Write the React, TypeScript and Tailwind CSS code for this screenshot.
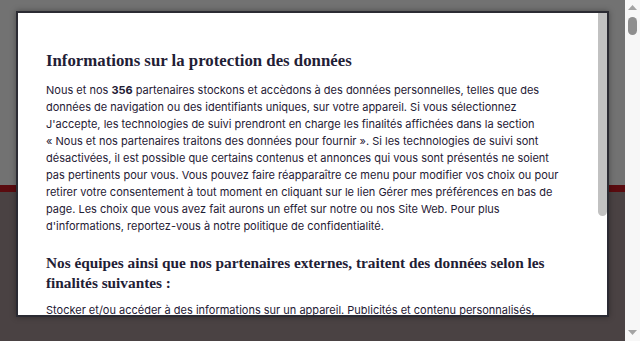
import React from 'react';

const bodyLines: React.ReactNode[] = [
  <>Nous et nos <b className="font-bold">356</b> partenaires stockons et accèdons à des données personnelles, telles que des</>,
  'données de navigation ou des identifiants uniques, sur votre appareil. Si vous sélectionnez',
  "J'accepte, les technologies de suivi prendront en charge les finalités affichées dans la section",
  '« Nous et nos partenaires traitons des données pour fournir ». Si les technologies de suivi sont',
  'désactivées, il est possible que certains contenus et annonces qui vous sont présentés ne soient',
  'pas pertinents pour vous. Vous pouvez faire réapparaître ce menu pour modifier vos choix ou pour',
  'retirer votre consentement à tout moment en cliquant sur le lien Gérer mes préférences en bas de',
  'page. Les choix que vous avez fait aurons un effet sur notre ou nos Site Web. Pour plus',
  "d'informations, reportez-vous à notre politique de confidentialité.",
];

const serif = { fontFamily: '"Liberation Serif", "DejaVu Serif", serif' };

export default function App() {
  return (
    <div className="relative flex h-[341px] w-[640px] overflow-hidden" style={{ fontFamily: 'Inter, "Liberation Sans", sans-serif' }}>
      {/* page behind the overlay */}
      <div className="flex flex-1 flex-col">
        <div className="h-[185px] bg-[#727272]" />
        <div className="h-[7px] bg-[#5a0b0f]" />
        <div className="flex-1 bg-[#4a4243]" />
      </div>

      {/* page scrollbar */}
      <div className="flex w-[15px] flex-col items-center bg-[#f7f7f7] pt-[5px]">
        <svg width="9" height="5" viewBox="0 0 9 5"><path d="M0 5 L4.5 0 L9 5 Z" fill="#a3a3a3" /></svg>
        <div className="mt-[7px] h-[18px] w-[9px] rounded-full bg-[#8f8f8f]" />
        <div className="flex-1" />
        <svg className="mb-[6px]" width="9" height="5" viewBox="0 0 9 5"><path d="M0 0 L9 0 L4.5 5 Z" fill="#a3a3a3" /></svg>
      </div>

      {/* consent modal */}
      <div className="absolute left-[16px] top-[11px] flex h-[306px] w-[593px] overflow-hidden border-2 border-[#2b2b33] bg-white shadow-[0_0_6px_rgba(0,0,0,0.35)]">
        <div className="flex-1 overflow-hidden pl-[28px] pt-[38px] text-[#1f2035]">
          <h2 className="whitespace-nowrap text-[16.8px] font-bold leading-[20px]" style={serif}>
            Informations sur la protection des données
          </h2>
          <p className="mt-[11px] whitespace-nowrap text-[11px] leading-[17px]">
            {bodyLines.map((l, i) => (
              <React.Fragment key={i}>
                {l}
                <br />
              </React.Fragment>
            ))}
          </p>
          <h2 className="mt-[18px] whitespace-nowrap text-[15.3px] font-bold leading-[20px]" style={serif}>
            Nos équipes ainsi que nos partenaires externes, traitent des données selon les
            <br />
            finalités suivantes :
          </h2>
          <p className="mt-[9px] whitespace-nowrap text-[11px] leading-[17px]">
            Stocker et/ou accéder à des informations sur un appareil. Publicités et contenu personnalisés,
          </p>
        </div>
        {/* inner scrollbar */}
        <div className="w-[9px] bg-white">
          <div className="h-[203px] w-[9px] rounded-b-full bg-[#c1c1c1]" />
        </div>
      </div>
    </div>
  );
}
